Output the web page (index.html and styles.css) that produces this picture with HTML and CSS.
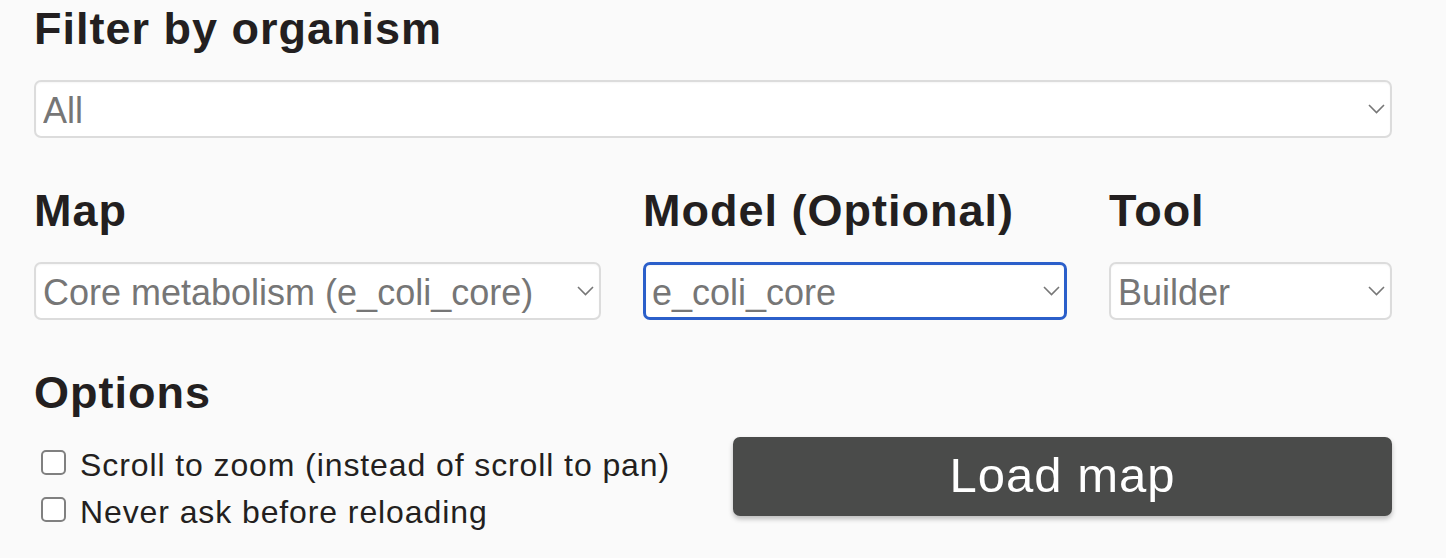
FILE: index.html
```html
<!DOCTYPE html>
<html lang="en">
<head>
<meta charset="utf-8">
<title>Load map</title>
<link rel="stylesheet" href="styles.css">
</head>
<body>
<div class="page">
  <h2 class="heading">Filter by organism</h2>
  <div class="select-wrap">
    <select class="select"><option>All</option></select>
    <svg class="chev" width="17" height="10" viewBox="0 0 17 10"><polyline points="1,1 8.5,8.5 16,1" fill="none" stroke="#777" stroke-width="1.6"/></svg>
  </div>

  <div class="triple">
    <div class="col">
      <h2 class="heading heading-sub">Map</h2>
      <div class="select-wrap">
        <select class="select"><option>Core metabolism (e_coli_core)</option></select>
        <svg class="chev" width="17" height="10" viewBox="0 0 17 10"><polyline points="1,1 8.5,8.5 16,1" fill="none" stroke="#777" stroke-width="1.6"/></svg>
      </div>
    </div>
    <div class="col">
      <h2 class="heading heading-sub">Model (Optional)</h2>
      <div class="select-wrap">
        <select class="select select-focus"><option>e_coli_core</option></select>
        <svg class="chev" width="17" height="10" viewBox="0 0 17 10"><polyline points="1,1 8.5,8.5 16,1" fill="none" stroke="#777" stroke-width="1.6"/></svg>
      </div>
    </div>
    <div class="col">
      <h2 class="heading heading-sub">Tool</h2>
      <div class="select-wrap">
        <select class="select"><option>Builder</option></select>
        <svg class="chev" width="17" height="10" viewBox="0 0 17 10"><polyline points="1,1 8.5,8.5 16,1" fill="none" stroke="#777" stroke-width="1.6"/></svg>
      </div>
    </div>
  </div>

  <h2 class="heading heading-sub">Options</h2>
  <div class="options">
    <div class="checks">
      <label class="check"><input type="checkbox" class="box"><span>Scroll to zoom (instead of scroll to pan)</span></label>
      <label class="check"><input type="checkbox" class="box"><span>Never ask before reloading</span></label>
    </div>
    <button class="load">Load map</button>
  </div>
</div>
</body>
</html>
```

FILE: styles.css
```css
html, body {
  margin: 0;
  padding: 0;
  background: #fafafa;
}

body {
  font-family: "Liberation Sans", Arial, sans-serif;
  color: #231f20;
}

.page {
  width: 1358px;
  padding: 3px 0 0 34px;
}

.heading {
  margin: 0;
  font-size: 45px;
  line-height: 52px;
  font-weight: bold;
  letter-spacing: 1px;
  color: #231f20;
}

.heading-sub {
  margin-top: 47px;
}

.select-wrap {
  position: relative;
  margin-top: 25px;
}

.select {
  display: block;
  width: 100%;
  height: 58px;
  box-sizing: border-box;
  -webkit-appearance: none;
  appearance: none;
  background: #fff;
  border: 2px solid #dcdcdc;
  border-radius: 7px;
  padding: 3px 40px 0 7px;
  margin: 0;
  font-family: "Liberation Sans", Arial, sans-serif;
  font-size: 36px;
  color: #767676;
  outline: none;
  box-shadow: inset 0 1px 2px rgba(0, 0, 0, 0.04);
}

.select-focus {
  border: 3px solid #2b5fca;
  padding-left: 6px;
}

.chev {
  position: absolute;
  right: 7px;
  top: 24px;
  pointer-events: none;
}

.triple {
  display: grid;
  grid-template-columns: 567px 424px 1fr;
  column-gap: 42px;
}

.options {
  display: grid;
  grid-template-columns: 699px 1fr;
  margin-top: 18px;
  align-items: start;
}

.checks {
  display: flex;
  flex-direction: column;
  padding-top: 5px;
}

.check {
  display: flex;
  align-items: flex-start;
  height: 47px;
  line-height: 47px;
  font-size: 32px;
  letter-spacing: 0.9px;
  color: #231f20;
}

.box {
  -webkit-appearance: none;
  appearance: none;
  width: 25px;
  height: 25px;
  box-sizing: border-box;
  margin: 8px 14px 0 7px;
  border: 2px solid #808080;
  border-radius: 5px;
  background: #fff;
  flex: none;
}

.load {
  display: block;
  width: 100%;
  height: 79px;
  margin: 0;
  border: none;
  border-radius: 7px;
  background: #4a4b4a;
  color: #fff;
  font-family: "Liberation Sans", Arial, sans-serif;
  font-size: 49px;
  letter-spacing: 1px;
  box-shadow: 0 3px 5px rgba(0, 0, 0, 0.25);
  padding: 0 0 4px 0;
}
```
